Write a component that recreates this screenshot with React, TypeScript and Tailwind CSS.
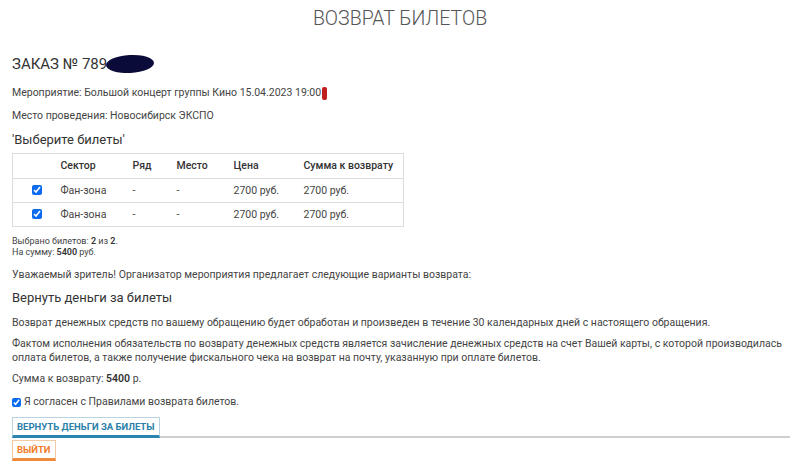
const rows = [
  { sector: "Фан-зона", row: "-", seat: "-", price: "2700 руб.", refund: "2700 руб." },
  { sector: "Фан-зона", row: "-", seat: "-", price: "2700 руб.", refund: "2700 руб." },
];

export default function App() {
  return (
    <div className="min-h-[466px] bg-white px-3 text-[10.5px] text-[#444]" style={{ fontFamily: 'Roboto, sans-serif' }}>
      <h1 className="pt-[5px] text-center text-[19.5px] font-light leading-[28px] text-[#555]">ВОЗВРАТ БИЛЕТОВ</h1>

      <div className="mt-[19px] flex items-center text-[15px] leading-[24px] text-[#333]">
        <span>ЗАКАЗ № 789</span>
        {/* hidden order number */}
        <span className="-ml-[1px] inline-block h-[18px] w-[48px] -rotate-3 rounded-[50%] bg-[#0b0b3a]" />
      </div>

      <p className="mt-[9px] flex items-center leading-[16px]">
        Мероприятие: Большой концерт группы Кино 15.04.2023 19:00
        <span className="ml-[1px] inline-block h-[13px] w-[5px] rounded-[2px] bg-[#c02020]" />
      </p>
      <p className="mt-[7px] leading-[16px]">Место проведения: Новосибирск ЭКСПО</p>

      <h3 className="mt-[6px] text-[13px] leading-[20px] text-[#333]">'Выберите билеты'</h3>

      <table className="mt-[3px] w-[392px] border-collapse border border-[#ddd]">
        <thead>
          <tr className="h-[25px] text-left text-[#333]">
            <th className="w-[48px]" />
            <th className="w-[72px] font-medium">Сектор</th>
            <th className="w-[44px] font-medium">Ряд</th>
            <th className="w-[57px] font-medium">Место</th>
            <th className="w-[70px] font-medium">Цена</th>
            <th className="font-medium">Сумма к возврату</th>
          </tr>
        </thead>
        <tbody>
          {rows.map((r, i) => (
            <tr key={i} className="h-[24px] border-t border-[#ddd]">
              <td className="text-center">
                <input type="checkbox" defaultChecked className="h-[10px] w-[10px] translate-y-[1px] accent-[#0b6bf0]" />
              </td>
              <td>{r.sector}</td>
              <td>{r.row}</td>
              <td>{r.seat}</td>
              <td>{r.price}</td>
              <td>{r.refund}</td>
            </tr>
          ))}
        </tbody>
      </table>

      <div className="mt-[9px] text-[9px] leading-[11px]">
        <div>
          Выбрано билетов: <b className="font-semibold text-[#333]">2</b> из <b className="font-semibold text-[#333]">2</b>.
        </div>
        <div>
          На сумму: <b className="font-semibold text-[#333]">5400</b> руб.
        </div>
      </div>

      <p className="mt-[9px] leading-[16px]">Уважаемый зритель! Организатор мероприятия предлагает следующие варианты возврата:</p>

      <h3 className="mt-[5px] text-[13px] leading-[20px] text-[#333]">Вернуть деньги за билеты</h3>

      <p className="mt-[7px] leading-[16px]">Возврат денежных средств по вашему обращению будет обработан и произведен в течение 30 календарных дней с настоящего обращения.</p>
      <p className="mt-[6px] leading-[14px]">
        Фактом исполнения обязательств по возврату денежных средств является зачисление денежных средств на счет Вашей карты, с которой производилась оплата билетов, а также получение фискального чека на возврат на почту, указанную при оплате билетов.
      </p>

      <p className="mt-[6px] leading-[16px]">
        Сумма к возврату: <b className="font-semibold text-[#333]">5400</b> р.
      </p>

      <label className="mt-[7px] flex items-center gap-[3px] leading-[16px]">
        <input type="checkbox" defaultChecked className="h-[9px] w-[9px] accent-[#0b6bf0]" />
        Я согласен с Правилами возврата билетов.
      </label>

      <div className="mt-[7px] flex w-[778px] items-end border-b-2 border-[#cfcfcf]">
        <button className="-mb-[2px] h-[21px] border border-b-[3px] border-[#b9d3df] border-b-[#2a86b0] bg-white px-[4px] text-[9.5px] font-bold leading-[14px] text-[#2a7fa8]">
          ВЕРНУТЬ ДЕНЬГИ ЗА БИЛЕТЫ
        </button>
      </div>
      <button className="mt-[2px] h-[21px] border border-b-[3px] border-[#f3c9a3] border-b-[#f08a3c] bg-white px-[4px] text-[9.5px] font-bold leading-[14px] text-[#f07d2c]">
        ВЫЙТИ
      </button>
    </div>
  );
}
